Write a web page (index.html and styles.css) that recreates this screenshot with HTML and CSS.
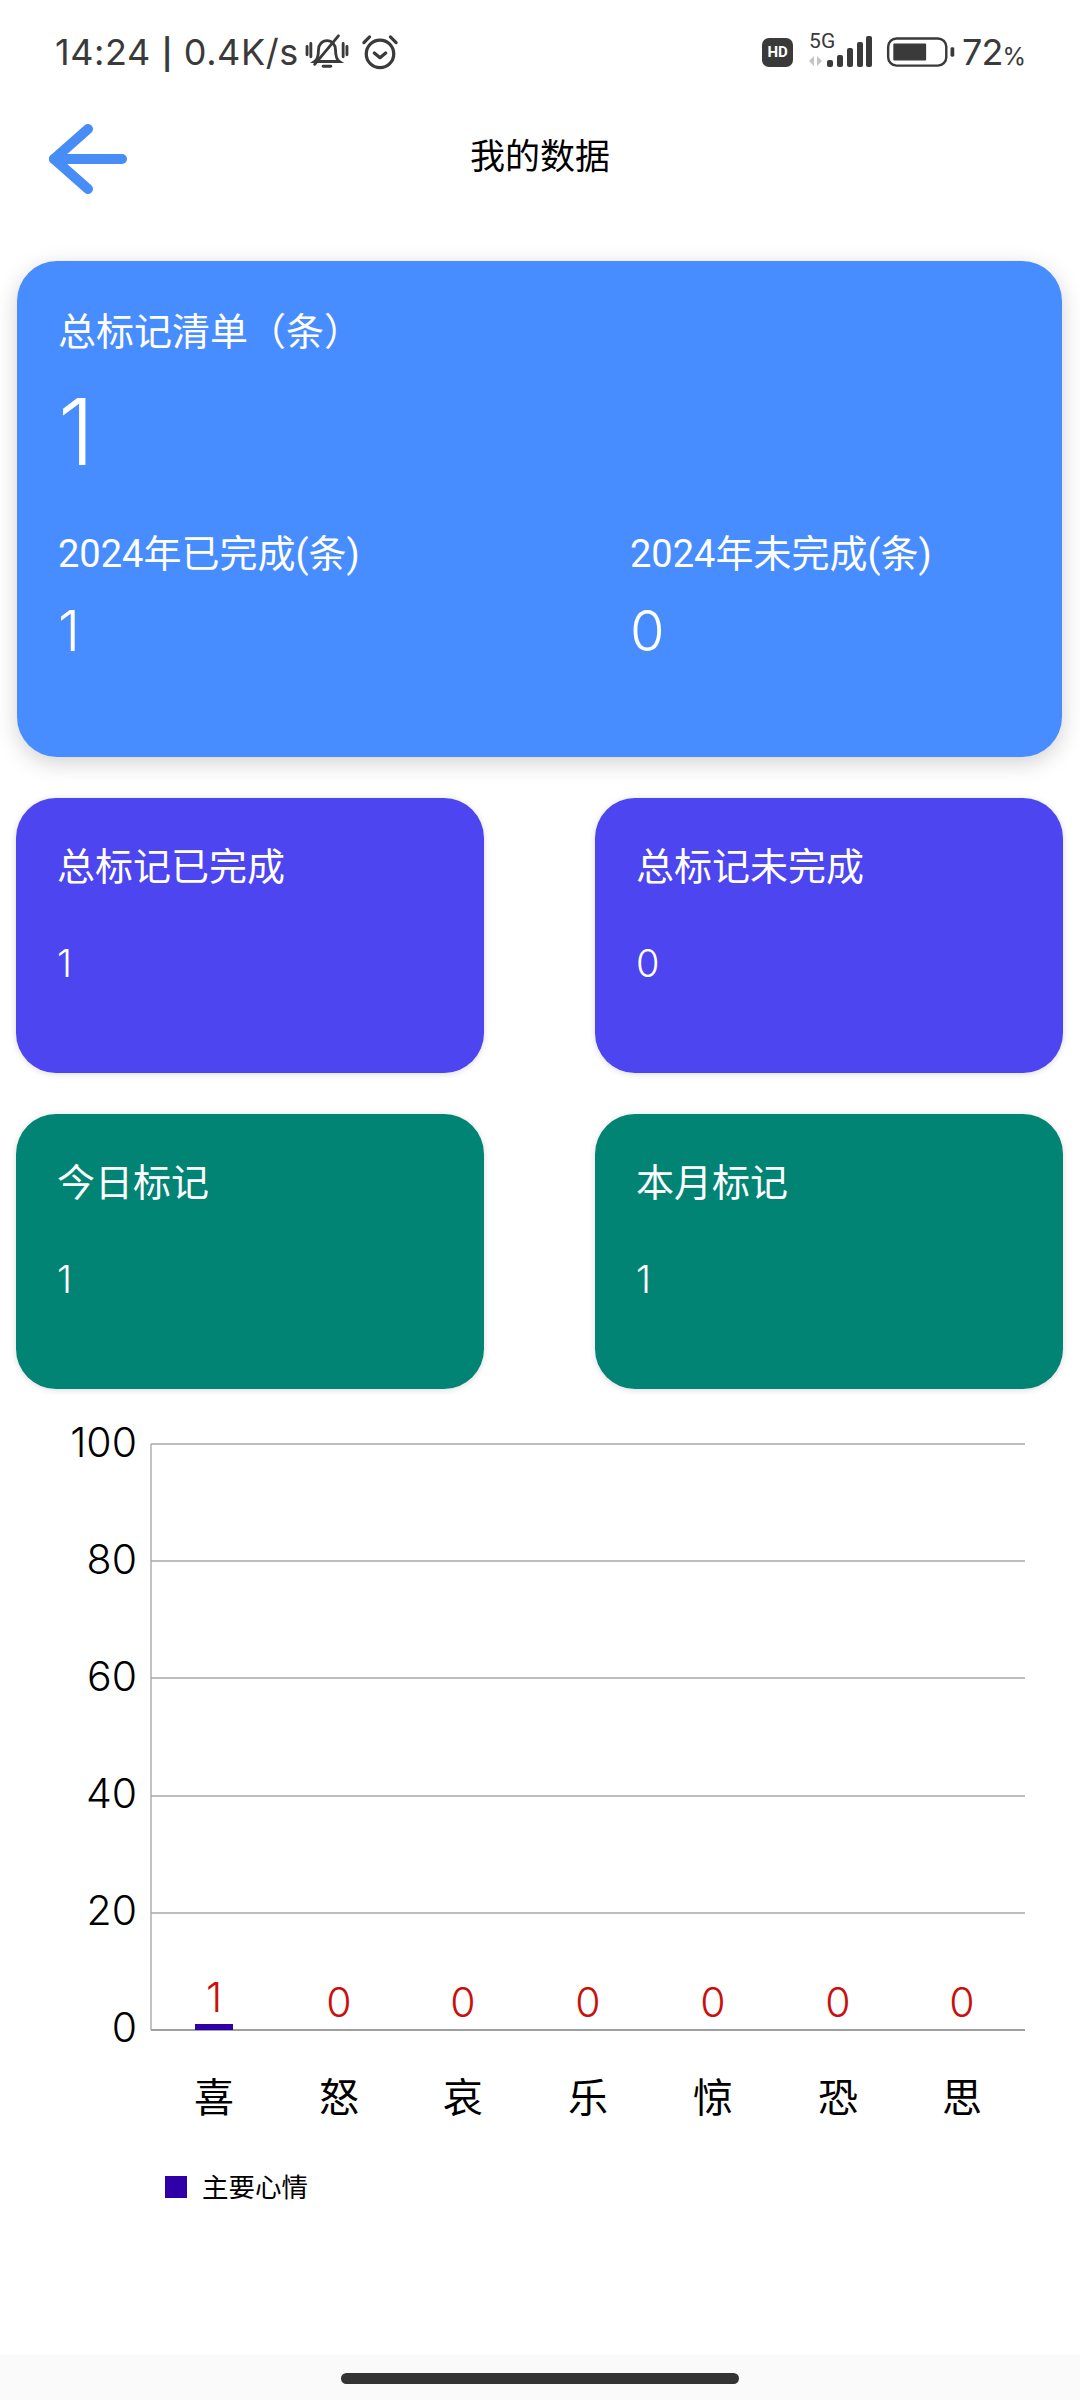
FILE: index.html
```html
<!DOCTYPE html>
<html lang="zh-CN">
<head>
    <meta charset="UTF-8">
    <meta name="viewport" content="width=device-width, initial-scale=1.0">
    <title>我的数据</title>
    <link rel="stylesheet" href="styles.css">
</head>
<body>
    <div class="status-bar">
        <div class="status-left">
            <span class="status-text">14:24 <span class="status-sep">|</span> 0.4K/s</span>
            <svg class="icon-bell" width="44" height="38" viewBox="0 0 46 40" fill="none" stroke="#3a3a3a" stroke-width="3" stroke-linecap="round">
                <path d="M10 30c3-2 4-5 4-12 0-6 4-10 9-10s9 4 9 10c0 7 1 10 4 12z"/>
                <path d="M19 35h8"/>
                <path d="M10 33 35 3"/>
                <path d="M2 14v9M6 11v14M44 14v9M40 11v14"/>
            </svg>
            <svg class="icon-alarm" width="38" height="36" viewBox="0 0 40 38" fill="none" stroke="#3a3a3a" stroke-width="3.4" stroke-linecap="round" stroke-linejoin="round">
                <circle cx="20" cy="21" r="14.5"/>
                <path d="M14 20l6 5 6-5"/>
                <path d="M3 9 9 3M37 9l-6-6"/>
            </svg>
        </div>
        <div class="status-right">
            <span class="hd-badge">HD</span>
            <div class="signal">
                <span class="signal-label">5G</span>
                <svg width="66" height="34" viewBox="0 0 66 34">
                    <path d="M8 22 3 27l5 5zM11 22l5 5-5 5z" fill="#c4c4c4"/>
                    <rect x="21" y="26" width="6" height="7" rx="2" fill="#3a3a3a"/>
                    <rect x="31" y="21" width="6" height="12" rx="2" fill="#3a3a3a"/>
                    <rect x="41" y="14" width="6" height="19" rx="2" fill="#3a3a3a"/>
                    <rect x="51" y="8" width="6" height="25" rx="2" fill="#3a3a3a"/>
                    <rect x="60" y="2" width="6" height="31" rx="2" fill="#3a3a3a"/>
                </svg>
            </div>
            <svg class="battery" width="71" height="30" viewBox="0 0 72 32">
                <rect x="1.5" y="1.5" width="62" height="29" rx="9" fill="none" stroke="#3a3a3a" stroke-width="2.6"/>
                <rect x="7" y="7" width="35" height="18" rx="1" fill="#3a3a3a"/>
                <rect x="68" y="11" width="4" height="10" rx="1.5" fill="#3a3a3a"/>
            </svg>
            <span class="battery-num">72<small>%</small></span>
        </div>
    </div>

    <div class="nav-bar">
        <svg class="back-arrow" width="80" height="74" viewBox="0 0 80 74" fill="none" stroke="#488cf5" stroke-width="10" stroke-linecap="round" stroke-linejoin="round">
            <path d="M6 37H74"/>
            <path d="M40 7 6 37l34 30"/>
        </svg>
        <h1 class="nav-title">我的数据</h1>
    </div>

    <section class="card-main">
        <div class="card-title">总标记清单（条）</div>
        <div class="card-total">1</div>
        <div class="year-row">
            <div>
                <div class="card-title">2024年已完成(条)</div>
                <div class="year-value">1</div>
            </div>
            <div>
                <div class="card-title">2024年未完成(条)</div>
                <div class="year-value">0</div>
            </div>
        </div>
    </section>

    <section class="card-grid">
        <div class="card-small purple">
            <div class="card-title">总标记已完成</div>
            <div class="small-value">1</div>
        </div>
        <div class="card-small purple">
            <div class="card-title">总标记未完成</div>
            <div class="small-value">0</div>
        </div>
        <div class="card-small green">
            <div class="card-title">今日标记</div>
            <div class="small-value">1</div>
        </div>
        <div class="card-small green">
            <div class="card-title">本月标记</div>
            <div class="small-value">1</div>
        </div>
    </section>

    <svg class="chart" width="1080" height="810" viewBox="0 1410 1080 810">
        <g stroke="#a8a8a8" stroke-width="1.4">
            <path d="M151 1444H1025"/>
            <path d="M151 1561H1025"/>
            <path d="M151 1678H1025"/>
            <path d="M151 1796H1025"/>
            <path d="M151 1913H1025"/>
            <path d="M151 1444V2030"/>
        </g>
        <path d="M151 2030H1025" stroke="#a0a0a0" stroke-width="2"/>
        <g class="axis-y" text-anchor="end">
            <text x="137" y="1457">100</text>
            <text x="137" y="1574">80</text>
            <text x="137" y="1691">60</text>
            <text x="137" y="1808">40</text>
            <text x="137" y="1925">20</text>
            <text x="137" y="2042">0</text>
        </g>
        <rect x="195" y="2024" width="38" height="6" fill="#2f00a8"/>
        <g class="bar-value" text-anchor="middle">
            <text x="214" y="2012">1</text>
            <text x="339" y="2017">0</text>
            <text x="463" y="2017">0</text>
            <text x="588" y="2017">0</text>
            <text x="713" y="2017">0</text>
            <text x="838" y="2017">0</text>
            <text x="962" y="2017">0</text>
        </g>
        <g class="axis-x" text-anchor="middle">
            <text x="214" y="2112">喜</text>
            <text x="339" y="2112">怒</text>
            <text x="463" y="2112">哀</text>
            <text x="588" y="2112">乐</text>
            <text x="713" y="2112">惊</text>
            <text x="838" y="2112">恐</text>
            <text x="962" y="2112">思</text>
        </g>
        <rect x="165" y="2176" width="22" height="22" fill="#2f00a8"/>
        <text class="legend" x="202" y="2197">主要心情</text>
    </svg>

    <div class="home-bar">
        <div class="home-pill"></div>
    </div>
</body>
</html>
```

FILE: styles.css
```css
* {
    box-sizing: border-box;
}
body {
    margin: 0;
    width: 1080px;
    height: 2400px;
    display: flex;
    flex-direction: column;
    background-color: #ffffff;
    font-family: "Inter", "Noto Sans CJK SC", sans-serif;
    font-weight: 300;
}
.status-bar {
    height: 68px;
    padding: 0 55px 0 55px;
    margin-top: 18px;
    display: flex;
    justify-content: space-between;
    align-items: center;
    color: #3a3a3a;
    flex-shrink: 0;
}
.status-left, .status-right {
    display: flex;
    align-items: center;
}
.status-text {
    font-size: 36px;
    font-weight: 400;
    letter-spacing: 0.6px;
}
.status-sep {
    font-size: 30px;
    font-weight: 600;
}
.icon-bell {
    margin-left: 6px;
}
.icon-alarm {
    margin-left: 12px;
}
.hd-badge {
    width: 31px;
    height: 29px;
    border-radius: 7px;
    background-color: #3a3a3a;
    color: #ffffff;
    font-family: "Roboto", sans-serif;
    font-size: 15px;
    font-weight: 700;
    display: flex;
    justify-content: center;
    align-items: center;
}
.signal {
    position: relative;
    margin-left: 13px;
    width: 66px;
    height: 36px;
}
.signal-label {
    position: absolute;
    left: 3px;
    top: -5px;
    font-family: "Roboto", sans-serif;
    font-size: 21px;
    font-weight: 400;
}
.battery {
    margin-left: 13px;
}
.battery-num {
    margin-left: 6px;
    font-size: 36px;
    font-weight: 400;
    letter-spacing: -1px;
}
.battery-num small {
    font-size: 24px;
}
.nav-bar {
    height: 140px;
    padding-left: 48px;
    display: flex;
    align-items: center;
    position: relative;
    flex-shrink: 0;
}
.back-arrow {
    margin-top: 6px;
}
.nav-title {
    position: absolute;
    left: 0;
    right: 0;
    top: 52px;
    margin: 0;
    text-align: center;
    font-size: 35px;
    font-weight: 400;
    line-height: 36px;
    color: #000000;
}
.card-main {
    margin: 35px 18px 0 17px;
    height: 496px;
    padding: 47px 41px 0;
    border-radius: 40px;
    background: #488dff;
    color: #ffffff;
    box-shadow: 0 6px 22px rgba(0, 0, 0, 0.18);
    flex-shrink: 0;
}
.card-title {
    font-family: "Roboto", "Noto Sans CJK SC", sans-serif;
    font-size: 38px;
    font-weight: 400;
    line-height: 48px;
    white-space: nowrap;
}
.card-total {
    font-size: 92px;
    line-height: 108px;
    margin-top: 22px;
}
.year-row {
    margin-top: 44px;
    display: grid;
    grid-template-columns: 572px 1fr;
}
.year-value {
    font-size: 56px;
    line-height: 66px;
    margin-top: 20px;
}
.card-grid {
    margin: 41px 17px 0 16px;
    display: grid;
    grid-template-columns: 468px 468px;
    column-gap: 111px;
    row-gap: 41px;
    flex-shrink: 0;
}
.card-small {
    height: 275px;
    padding: 45px 41px 0;
    border-radius: 40px;
    color: #ffffff;
    box-shadow: 0 1px 6px rgba(0, 0, 0, 0.15);
}
.purple {
    background-color: #4c45f0;
}
.green {
    background-color: #028475;
}
.small-value {
    font-size: 38px;
    line-height: 46px;
    margin-top: 49px;
}
.chart {
    margin-top: 21px;
    flex-shrink: 0;
}
.axis-y {
    font-size: 41px;
    fill: #000000;
}
.bar-value {
    font-size: 41px;
    fill: #c8100f;
}
.axis-x {
    font-size: 40px;
    font-weight: 400;
    fill: #000000;
}
.legend {
    font-size: 26.5px;
    font-weight: 400;
    fill: #000000;
}
.home-bar {
    margin-top: auto;
    height: 45px;
    background-color: #fafafa;
    display: flex;
    justify-content: center;
    padding-top: 18px;
    flex-shrink: 0;
}
.home-pill {
    width: 398px;
    height: 11px;
    border-radius: 6px;
    background-color: #333333;
}
```
